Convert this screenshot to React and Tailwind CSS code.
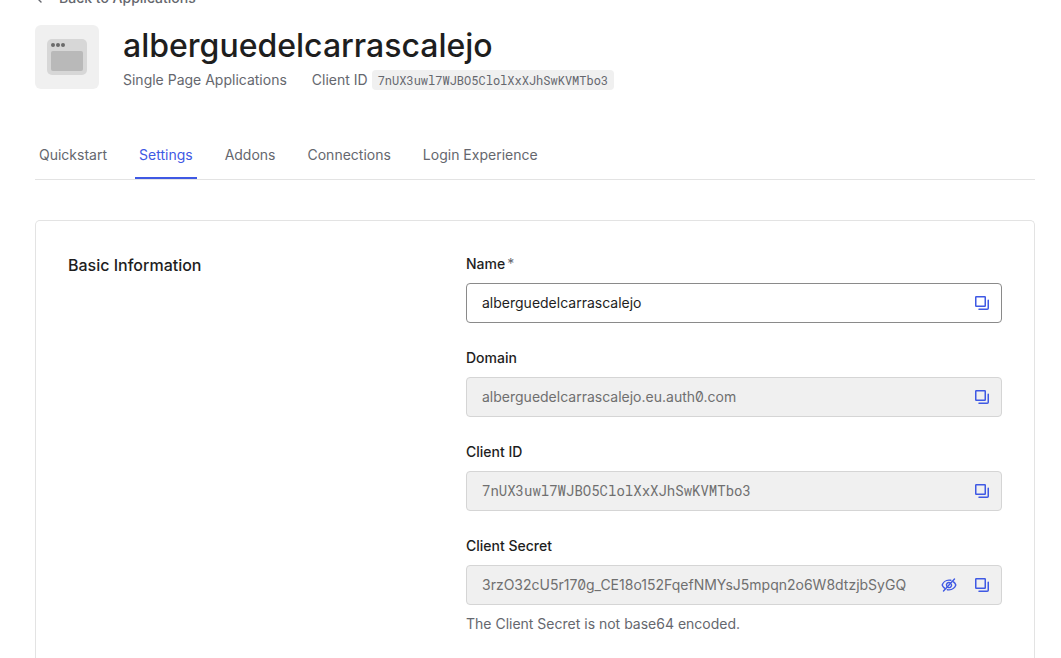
import { useState } from "react";

const CLIENT_ID = "7nUX3uwl7WJBO5ClolXxXJhSwKVMTbo3";
const SECRET = "3rzO32cU5r170g_CE18o152FqefNMYsJ5mpqn2o6W8dtzjbSyGQ";
const TABS = ["Quickstart", "Settings", "Addons", "Connections", "Login Experience"];

function CopyIcon() {
  return (
    <svg width="16" height="16" viewBox="0 0 16 16" fill="none" stroke="currentColor" strokeWidth="1.5" strokeLinecap="round" strokeLinejoin="round" aria-hidden="true">
      <rect x="1.75" y="1.75" width="9.5" height="9.5" rx="0.5" />
      <path d="M14.25 5.25V13.25a1 1 0 0 1-1 1H5" />
    </svg>
  );
}

function EyeOffIcon() {
  return (
    <svg width="16" height="16" viewBox="0 0 16 16" fill="none" stroke="currentColor" strokeWidth="1.4" strokeLinecap="round" strokeLinejoin="round" aria-hidden="true">
      <path d="M9.8 3.3A8 8 0 0 0 8 3.1C4.4 3.1 1.9 5.8 1.2 8c.35 1.1 1.15 2.25 2.3 3.15" />
      <path d="M6.3 12.7c.54.13 1.1.2 1.7.2 3.6 0 6.1-2.7 6.8-4.9-.35-1.1-1.15-2.25-2.3-3.15" />
      <path d="M9.3 5.9A2.5 2.5 0 0 0 5.7 9.1" />
      <path d="M6.9 10.3a2.5 2.5 0 0 0 3.5-3.1" />
      <path d="M13.5 2L2.5 14" />
    </svg>
  );
}

function AppLogo() {
  return (
    <svg className="shrink-0" width="64" height="64" viewBox="0 0 64 64" aria-hidden="true">
      <rect width="64" height="64" rx="6" fill="#f0f0f0" />
      <rect x="12" y="14" width="40" height="36" rx="5" fill="#d7d7d7" />
      <rect x="16" y="26" width="32" height="20" rx="2" fill="#b9b9b9" />
      <g fill="#6b6b6b">
        <circle cx="18" cy="20" r="2" />
        <circle cx="23" cy="20" r="2" />
        <circle cx="28" cy="20" r="2" />
      </g>
    </svg>
  );
}

function IconButton({ label, onClick, children }) {
  return (
    <button type="button" aria-label={label} onClick={onClick} className="shrink-0 cursor-pointer text-[#3f59e4]">
      {children}
    </button>
  );
}

function Field({ id, label, value, required, editable, mono, secret, hint }) {
  const [text, setText] = useState(value);
  const [hidden, setHidden] = useState(false);
  return (
    <div className="flex flex-col">
      <label htmlFor={id} className="text-sm leading-[22px] font-medium text-[#1e1e1e]">
        {label}
        {required && <span className="ml-0.5 font-normal text-[#65676e]">*</span>}
      </label>
      <div
        className={
          "mt-2 flex h-10 items-center gap-[17px] rounded-[4px] border pr-[11px] pl-[15px] " +
          (editable ? "border-[#8a8a8a] bg-white" : "border-[#d5d5d5] bg-[#f0f0f0]")
        }
      >
        <input
          id={id}
          type={hidden ? "password" : "text"}
          value={text}
          readOnly={!editable}
          required={required}
          spellCheck={false}
          onChange={(e) => setText(e.target.value)}
          className={
            "h-full min-w-0 flex-1 bg-transparent pb-0.5 text-sm outline-none " +
            (editable ? "text-[#1e1e1e] " : "text-[#6f6f6f] ") +
            (mono ? "font-['Roboto_Mono','Liberation_Mono',monospace]" : "slashed-zero")
          }
        />
        {secret && (
          <IconButton label="Toggle secret visibility" onClick={() => setHidden(!hidden)}>
            <EyeOffIcon />
          </IconButton>
        )}
        <IconButton label={"Copy " + label} onClick={() => navigator.clipboard?.writeText(text)}>
          <CopyIcon />
        </IconButton>
      </div>
      {hint && <p className="mt-2 text-sm leading-[22px] text-[#65676e]">{hint}</p>}
    </div>
  );
}

export default function App() {
  const [active, setActive] = useState("Settings");
  return (
    <main className="flex h-screen flex-col overflow-hidden bg-white pr-[26px] pl-[35px] font-['Inter',sans-serif] text-sm text-[#65676e]">
      <a href="#applications" className="-mt-3 flex items-center gap-3 self-start text-sm leading-5 font-medium">
        <svg width="12" height="12" viewBox="0 0 12 12" fill="none" stroke="currentColor" strokeWidth="1.4" strokeLinecap="round" strokeLinejoin="round" aria-hidden="true">
          <path d="M11 6H2M6 2L2 6l4 4" />
        </svg>
        Back to Applications
      </a>

      <header className="mt-[17px] flex gap-6">
        <AppLogo />
        <div className="min-w-0">
          <h1 className="text-[32px] leading-[42px] font-medium text-[#1e1e1e]">alberguedelcarrascalejo</h1>
          <div className="mt-0.5 flex items-center gap-[25px] leading-[22px]">
            <span>Single Page Applications</span>
            <span className="flex items-center gap-1">
              Client ID
              <code className="rounded-[4px] bg-[#f0f0f0] px-[6px] font-['Roboto_Mono','Liberation_Mono',monospace] text-xs leading-5">
                {CLIENT_ID}
              </code>
            </span>
          </div>
        </div>
      </header>

      <nav className="mt-[38px] flex gap-6 border-b border-[#e3e3e3]">
        {TABS.map((tab) => (
          <button
            key={tab}
            type="button"
            onClick={() => setActive(tab)}
            className={
              "cursor-pointer border-b-2 px-1 pt-[15px] pb-[11px] leading-[22px] " +
              (active === tab ? "border-[#3f59e4] text-[#3f59e4]" : "border-transparent")
            }
          >
            {tab}
          </button>
        ))}
      </nav>

      <section className="mt-10 grid flex-1 grid-cols-[366fr_536fr] gap-8 rounded-t-[5px] border border-b-0 border-[#e3e3e3] p-8">
        <h2 className="text-base leading-6 font-medium text-[#1e1e1e]">Basic Information</h2>
        <form className="flex flex-col gap-6" onSubmit={(e) => e.preventDefault()}>
          <Field id="name" label="Name" value="alberguedelcarrascalejo" required editable />
          <Field id="domain" label="Domain" value="alberguedelcarrascalejo.eu.auth0.com" />
          <Field id="client-id" label="Client ID" value={CLIENT_ID} mono />
          <Field id="client-secret" label="Client Secret" value={SECRET} secret hint="The Client Secret is not base64 encoded." />
        </form>
      </section>
    </main>
  );
}
